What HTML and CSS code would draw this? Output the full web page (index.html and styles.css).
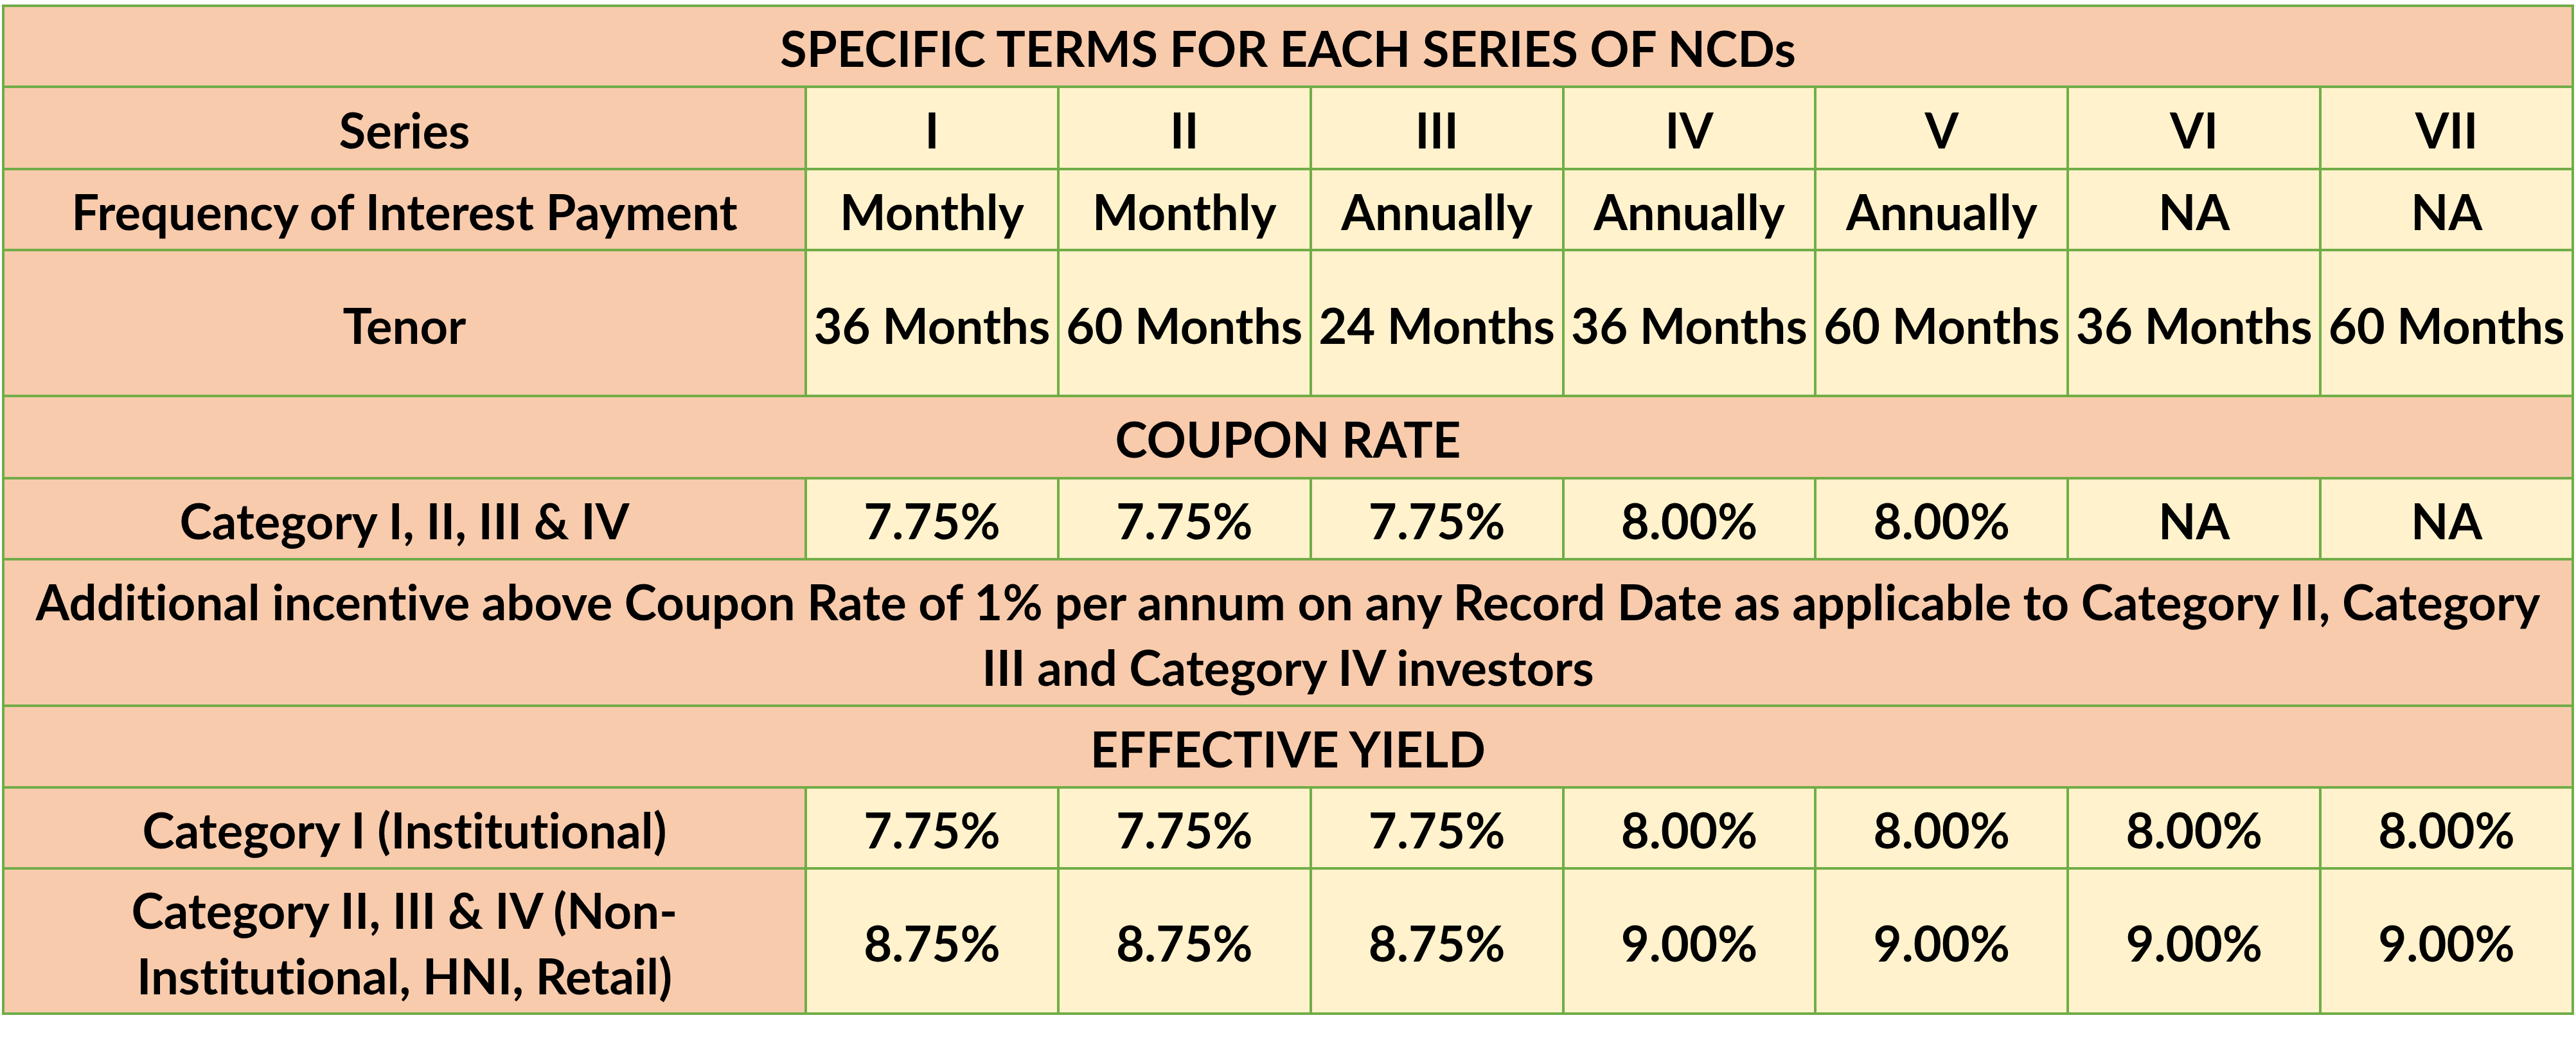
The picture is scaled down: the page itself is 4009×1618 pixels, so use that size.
FILE: index.html
```html
<!DOCTYPE html>
<html lang="en">
<head>
<meta charset="utf-8">
<title>Specific Terms for Each Series of NCDs</title>
<link rel="stylesheet" href="styles.css">
</head>
<body>
<div class="terms">
  <div class="cell head span">SPECIFIC TERMS FOR EACH SERIES OF NCDs</div>

  <div class="cell head">Series</div>
  <div class="cell">I</div>
  <div class="cell">II</div>
  <div class="cell">III</div>
  <div class="cell">IV</div>
  <div class="cell">V</div>
  <div class="cell">VI</div>
  <div class="cell">VII</div>

  <div class="cell head">Frequency of Interest Payment</div>
  <div class="cell">Monthly</div>
  <div class="cell">Monthly</div>
  <div class="cell">Annually</div>
  <div class="cell">Annually</div>
  <div class="cell">Annually</div>
  <div class="cell">NA</div>
  <div class="cell">NA</div>

  <div class="cell head">Tenor</div>
  <div class="cell">36 Months</div>
  <div class="cell">60 Months</div>
  <div class="cell">24 Months</div>
  <div class="cell">36 Months</div>
  <div class="cell">60 Months</div>
  <div class="cell">36 Months</div>
  <div class="cell">60 Months</div>

  <div class="cell head span">COUPON RATE</div>

  <div class="cell head">Category I, II, III &amp; IV</div>
  <div class="cell">7.75%</div>
  <div class="cell">7.75%</div>
  <div class="cell">7.75%</div>
  <div class="cell">8.00%</div>
  <div class="cell">8.00%</div>
  <div class="cell">NA</div>
  <div class="cell">NA</div>

  <div class="cell head span">Additional incentive above Coupon Rate of 1% per annum on any Record Date as applicable to Category II, Category<br>III and Category IV investors</div>

  <div class="cell head span">EFFECTIVE YIELD</div>

  <div class="cell head">Category I (Institutional)</div>
  <div class="cell">7.75%</div>
  <div class="cell">7.75%</div>
  <div class="cell">7.75%</div>
  <div class="cell">8.00%</div>
  <div class="cell">8.00%</div>
  <div class="cell">8.00%</div>
  <div class="cell">8.00%</div>

  <div class="cell head">Category II, III &amp; IV (Non-<br>Institutional, HNI, Retail)</div>
  <div class="cell">8.75%</div>
  <div class="cell">8.75%</div>
  <div class="cell">8.75%</div>
  <div class="cell">9.00%</div>
  <div class="cell">9.00%</div>
  <div class="cell">9.00%</div>
  <div class="cell">9.00%</div>
</div>
</body>
</html>
```
FILE: styles.css
```css
html, body {
  margin: 0;
  padding: 0;
  background: #ffffff;
}

body {
  padding: 7px 0 0 3px;
  font-family: Lato, "Open Sans", "Liberation Sans", sans-serif;
  font-weight: 700;
  color: #000000;
  font-variant-ligatures: none;
  font-feature-settings: "liga" 0, "clig" 0;
}

.terms {
  display: grid;
  width: 4003px;
  box-sizing: border-box;
  padding: 4px;
  gap: 4px;
  background: #70ad47;
  grid-template-columns: 1245px repeat(7, 1fr);
  grid-template-rows: 122px 124px 122px 223px 124px 122px 224px 123px 122px 222px;
}

.cell {
  display: flex;
  align-items: center;
  justify-content: center;
  text-align: center;
  background: #fff2cc;
  font-size: 76px;
  line-height: 102px;
  white-space: nowrap;
  padding-top: 6px;
  box-sizing: border-box;
}

.head {
  background: #f8cbad;
}

.span {
  grid-column: 1 / -1;
}
```
